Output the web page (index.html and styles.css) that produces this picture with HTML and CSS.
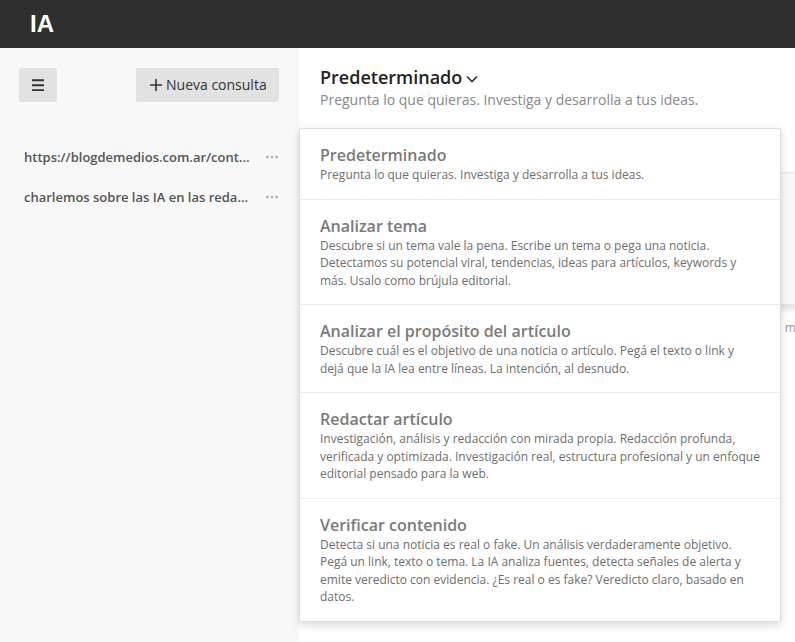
FILE: index.html
```html
<!DOCTYPE html>
<html lang="es">
<head>
    <meta charset="UTF-8">
    <meta name="viewport" content="width=device-width, initial-scale=1.0">
    <title>IA</title>
    <link rel="stylesheet" href="styles.css">
</head>
<body>
    <header class="topbar">
        <span class="brand">IA</span>
    </header>

    <div class="layout">
        <aside class="sidebar">
            <div class="sidebar-actions">
                <button class="icon-btn" title="Menú">
                    <svg width="12" height="12" viewBox="0 0 12 12"><path d="M0 1.3h12M0 6.3h12M0 11.3h12" stroke="#333" stroke-width="2"/></svg>
                </button>
                <button class="new-btn">
                    <svg width="12" height="12" viewBox="0 0 12 12"><path d="M6 0v12M0 6h12" stroke="#333" stroke-width="1.6"/></svg>
                    Nueva consulta
                </button>
            </div>
            <ul class="chat-list">
                <li class="chat-item">
                    <span class="chat-title">https://blogdemedios.com.ar/contenidos/la-ia-en-las-redacciones</span>
                    <svg class="chat-more" width="12" height="4" viewBox="0 0 12 4"><circle cx="1.5" cy="2" r="1.2"/><circle cx="6" cy="2" r="1.2"/><circle cx="10.5" cy="2" r="1.2"/></svg>
                </li>
                <li class="chat-item">
                    <span class="chat-title">charlemos sobre las IA en las redacciones de los medios</span>
                    <svg class="chat-more" width="12" height="4" viewBox="0 0 12 4"><circle cx="1.5" cy="2" r="1.2"/><circle cx="6" cy="2" r="1.2"/><circle cx="10.5" cy="2" r="1.2"/></svg>
                </li>
            </ul>
        </aside>

        <main class="main">
            <div class="mode-picker">
                <button class="mode-toggle">
                    Predeterminado
                    <svg width="12" height="8" viewBox="0 0 12 8"><path d="M1 1.5l5 5 5-5" fill="none" stroke="#333" stroke-width="1.6"/></svg>
                </button>
                <p class="mode-desc">Pregunta lo que quieras. Investiga y desarrolla a tus ideas.</p>

                <div class="mode-menu">
                    <div class="mode-option">
                        <div class="mode-name">Predeterminado</div>
                        <div class="mode-text">Pregunta lo que quieras. Investiga y desarrolla a tus ideas.</div>
                    </div>
                    <div class="mode-option">
                        <div class="mode-name">Analizar tema</div>
                        <div class="mode-text">Descubre si un tema vale la pena. Escribe un tema o pega una noticia. Detectamos su potencial viral, tendencias, ideas para artículos, keywords y más. Usalo como brújula editorial.</div>
                    </div>
                    <div class="mode-option">
                        <div class="mode-name">Analizar el propósito del artículo</div>
                        <div class="mode-text">Descubre cuál es el objetivo de una noticia o artículo. Pegá el texto o link y dejá que la IA lea entre líneas. La intención, al desnudo.</div>
                    </div>
                    <div class="mode-option">
                        <div class="mode-name">Redactar artículo</div>
                        <div class="mode-text">Investigación, análisis y redacción con mirada propia. Redacción profunda, verificada y optimizada. Investigación real, estructura profesional y un enfoque editorial pensado para la web.</div>
                    </div>
                    <div class="mode-option">
                        <div class="mode-name">Verificar contenido</div>
                        <div class="mode-text">Detecta si una noticia es real o fake. Un análisis verdaderamente objetivo. Pegá un link, texto o tema. La IA analiza fuentes, detecta señales de alerta y emite veredicto con evidencia. ¿Es real o es fake? Veredicto claro, basado en datos.</div>
                    </div>
                </div>
            </div>

            <div class="composer">
                <textarea class="composer-input" placeholder="Escribe tu consulta..."></textarea>
            </div>
            <p class="disclaimer">Las respuestas son generadas con inteligencia artificial y pueden contener errores, mejor verificá la información.</p>
        </main>
    </div>
</body>
</html>
```

FILE: styles.css
```css
html, body {
    margin: 0;
    height: 100%;
    overflow: hidden;
}
body {
    font-family: "Open Sans", "Noto Sans", sans-serif;
    color: #333;
    background: #fff;
}
.topbar {
    height: 48px;
    background-color: #2f2f2f;
    display: flex;
    align-items: center;
    padding-left: 30px;
}
.brand {
    font-family: "Liberation Sans", Arial, sans-serif;
    font-weight: bold;
    font-size: 24px;
    color: #fff;
    line-height: 1;
}
.layout {
    display: flex;
    height: calc(100% - 48px);
}
.sidebar {
    flex: none;
    width: 297px;
    box-sizing: border-box;
    padding: 20px 18px 0 19px;
    background-color: #f8f8f8;
    box-shadow: 1px 0 3px rgba(0, 0, 0, 0.06);
    position: relative;
    z-index: 1;
}
.sidebar-actions {
    display: flex;
    justify-content: space-between;
}
.sidebar-actions button {
    height: 34px;
    border: none;
    border-radius: 2px;
    background-color: #e2e2e2;
    color: #333;
    cursor: pointer;
    display: flex;
    align-items: center;
    font-family: inherit;
}
.icon-btn {
    width: 38px;
    justify-content: center;
    padding: 0;
}
.new-btn {
    width: 143px;
    padding: 0 0 1px 14px;
    gap: 4px;
    font-size: 14px;
}
.chat-list {
    list-style: none;
    margin: 35px 0 0;
    padding: 0;
}
.chat-item {
    display: flex;
    align-items: center;
    padding: 10px 1px 10px 5px;
    line-height: 20px;
}
.chat-title {
    flex: 1;
    min-width: 0;
    white-space: nowrap;
    overflow: hidden;
    text-overflow: ellipsis;
    font-size: 13px;
    font-weight: 600;
    color: #555;
    margin-right: 15px;
}
.chat-more {
    flex: none;
    fill: #a5a5a5;
}
.main {
    flex: 1;
    min-width: 0;
    padding: 17px 0 0 23px;
}
.mode-picker {
    position: relative;
}
.mode-toggle {
    border: none;
    background: none;
    padding: 0;
    font-family: inherit;
    font-size: 18px;
    font-weight: 600;
    line-height: 24px;
    color: #222;
    display: flex;
    align-items: center;
    gap: 4px;
    cursor: pointer;
}
.mode-toggle svg {
    margin-top: 3px;
}
.mode-desc {
    margin: 1px 0 0;
    font-size: 14px;
    line-height: 20px;
    color: #888;
}
.mode-menu {
    position: absolute;
    top: 63px;
    left: -21px;
    width: 482px;
    box-sizing: border-box;
    background: #fff;
    border: 1px solid #dcdcdc;
    border-radius: 2px;
    box-shadow: 0 3px 10px rgba(0, 0, 0, 0.16);
    z-index: 5;
}
.mode-option {
    padding: 15px 20px 15px 20px;
    border-top: 1px solid #ececec;
    cursor: pointer;
}
.mode-option:first-child {
    border-top: none;
}
.mode-name {
    font-size: 16px;
    font-weight: 600;
    line-height: 22px;
    color: #7a7a7a;
}
.mode-text {
    font-size: 12px;
    line-height: 17.5px;
    color: #6e6e6e;
}
.composer {
    margin-top: 62px;
    width: 560px;
    height: 133px;
    box-sizing: border-box;
    background: #f8f8f8;
    border: 1px solid #e6e6e6;
    border-radius: 8px;
    box-shadow: 0 4px 6px rgba(0, 0, 0, 0.12);
}
.composer-input {
    width: 100%;
    height: 100%;
    box-sizing: border-box;
    border: none;
    background: transparent;
    resize: none;
    padding: 14px 16px;
    font-family: inherit;
    font-size: 14px;
}
.disclaimer {
    margin: 14px 0 0;
    font-size: 12px;
    color: #999;
    white-space: nowrap;
}
```
